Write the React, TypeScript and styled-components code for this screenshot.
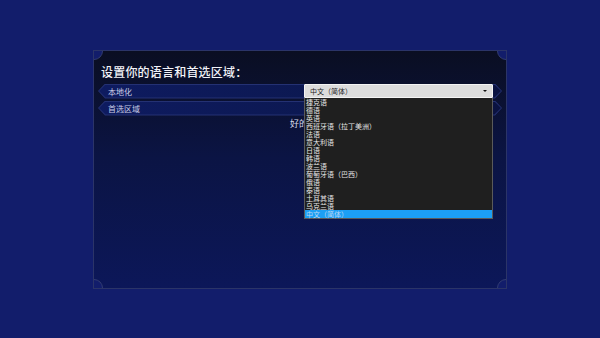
import React from "react";
import styled, { createGlobalStyle } from "styled-components";

const GlobalStyle = createGlobalStyle`
  html, body {
    margin: 0;
    padding: 0;
    background: #121d6b;
  }
  body {
    font-family: "Noto Sans CJK SC", "Noto Sans", sans-serif;
  }
`;

const languages = [
  "捷克语",
  "德语",
  "英语",
  "西班牙语（拉丁美洲）",
  "法语",
  "意大利语",
  "日语",
  "韩语",
  "波兰语",
  "葡萄牙语（巴西）",
  "俄语",
  "泰语",
  "土耳其语",
  "乌克兰语",
  "中文（简体）",
];

const Screen = styled.div`
  width: 600px;
  height: 338px;
  display: flex;
  align-items: center;
  justify-content: center;
  background: #121d6b;
`;

const Panel = styled.div`
  position: relative;
  width: 414px;
  height: 239px;
  box-sizing: border-box;
  border: 1px solid #2b3468;
  background: linear-gradient(180deg, #0a0e22 0%, #0b1444 45%, #0c1759 100%);
  overflow: hidden;
  padding: 12px 4px 0 4px;
  display: flex;
  flex-direction: column;
`;

// concave corner cut-outs
const Notch = styled.span<{ $x: "left" | "right"; $y: "top" | "bottom" }>`
  position: absolute;
  width: 16px;
  height: 16px;
  border-radius: 50%;
  background: #121d6b;
  border: 1px solid #323c72;
  ${(p) => (p.$x === "left" ? "left: -9px;" : "right: -9px;")}
  ${(p) => (p.$y === "top" ? "top: -9px;" : "bottom: -9px;")}
`;

const Title = styled.h1`
  margin: 0 0 3px 3px;
  font-size: 12px;
  line-height: 18px;
  font-weight: 500;
  color: #f2f3f8;
  letter-spacing: 0.2px;
`;

const Rows = styled.div`
  display: flex;
  flex-direction: column;
  gap: 2px;
`;

const RowFrame = styled.div`
  position: relative;
  height: 15px;
  background: #243173;
  clip-path: polygon(7px 0, calc(100% - 7px) 0, 100% 50%, calc(100% - 7px) 100%, 7px 100%, 0 50%);
`;

const RowInner = styled.div`
  position: absolute;
  inset: 1px;
  background: linear-gradient(90deg, #0e1b60 0%, #0c1850 60%, #0a1240 100%);
  clip-path: polygon(6.5px 0, calc(100% - 6.5px) 0, 100% 50%, calc(100% - 6.5px) 100%, 6.5px 100%, 0 50%);
  display: flex;
  align-items: center;
  padding-left: 9px;
  font-size: 8px;
  color: #c9cde6;
`;

const SelectArea = styled.div`
  position: absolute;
  left: 210px;
  top: 33px;
  width: 189px;
  z-index: 2;
`;

const SelectBox = styled.div`
  height: 14px;
  box-sizing: border-box;
  background: #dcdcdc;
  border: 1px solid #f4f4f4;
  border-radius: 1px;
  display: flex;
  align-items: center;
  justify-content: space-between;
  padding: 0 5px 0 5px;
  font-size: 7px;
  color: #1c1c1c;
`;

const Caret = styled.span`
  width: 0;
  height: 0;
  border-left: 2px solid transparent;
  border-right: 2px solid transparent;
  border-top: 2px solid #111;
`;

const List = styled.ul`
  list-style: none;
  margin: 0;
  padding: 0;
  background: #1f1f1f;
  border: 1px solid #5a5a5a;
  border-top: none;
  box-sizing: border-box;
`;

const Item = styled.li<{ $active?: boolean }>`
  height: 8px;
  line-height: 8px;
  font-size: 7px;
  padding-left: 1px;
  color: ${(p) => (p.$active ? "#bcd7f2" : "#e6e6e6")};
  background: ${(p) => (p.$active ? "#1c9ff5" : "transparent")};
  white-space: nowrap;
`;

const Footer = styled.div`
  display: flex;
  justify-content: center;
  margin-top: 1px;
  padding-right: 2px;
`;

const OkText = styled.span`
  font-size: 9px;
  color: #d6d9ea;
  line-height: 14px;
`;

function App() {
  return (
    <>
      <GlobalStyle />
      <Screen>
        <Panel>
          <Notch $x="left" $y="top" />
          <Notch $x="right" $y="top" />
          <Notch $x="left" $y="bottom" />
          <Notch $x="right" $y="bottom" />
          <Title>设置你的语言和首选区域：</Title>
          <Rows>
            <RowFrame>
              <RowInner>本地化</RowInner>
            </RowFrame>
            <RowFrame>
              <RowInner>首选区域</RowInner>
            </RowFrame>
          </Rows>
          <Footer>
            <OkText>好的</OkText>
          </Footer>
          <SelectArea>
            <SelectBox>
              <span>中文（简体）</span>
              <Caret />
            </SelectBox>
            <List>
              {languages.map((l, i) => (
                <Item key={l} $active={i === languages.length - 1}>
                  {l}
                </Item>
              ))}
            </List>
          </SelectArea>
        </Panel>
      </Screen>
    </>
  );
}

export default App;
